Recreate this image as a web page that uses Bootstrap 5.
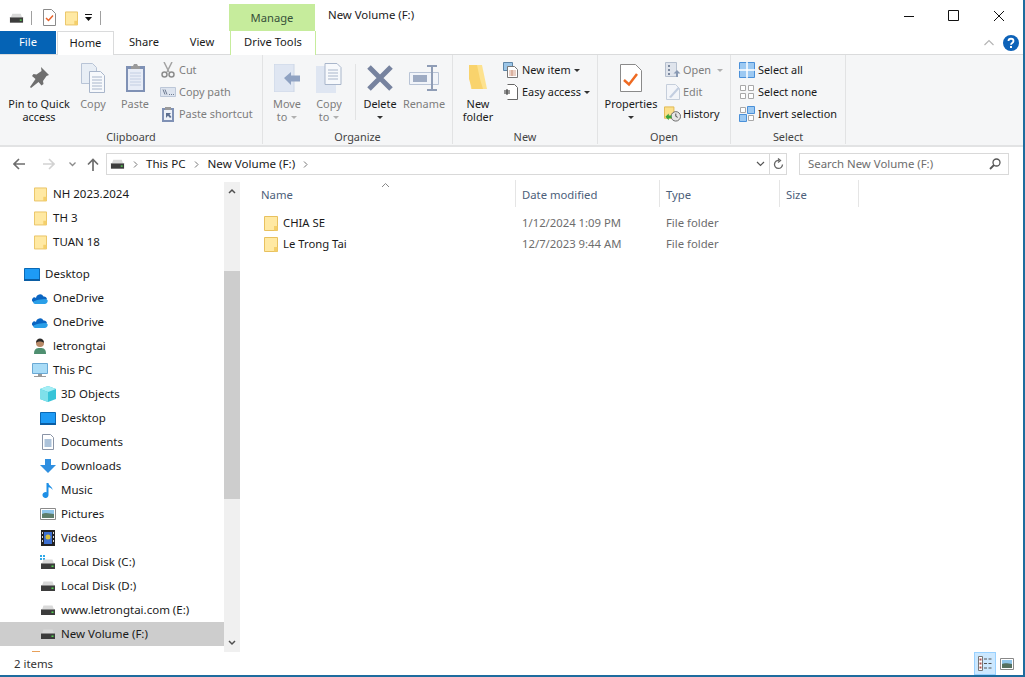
<!doctype html>
<html lang="en">
<head>
  <meta charset="utf-8">
  <meta name="viewport" content="width=device-width, initial-scale=1">
  <title>New Volume (F:)</title>
  <link href="https://cdn.jsdelivr.net/npm/bootstrap@5.3.0/dist/css/bootstrap.min.css" rel="stylesheet">
  <style>
    html, body { height: 100%; overflow: hidden; }
    body { font-family: "Noto Sans", "Open Sans", sans-serif; font-size: 10.9px; color: #1a1a1a; background: #fff; }
    svg { display: block; flex: none; }
    .win { height: 677px; width: 1025px; border-right: 2px solid #1e6c9e; border-bottom: 2px solid #1e6c9e; }

    /* title bar */
    .titlebar { height: 31px; }
    .qa-sep { width: 1px; height: 14px; background: #a0a0a0; }
    .qa { padding: 4px 0 0 9px; gap: 7px; width: 229px; }
    .qa-2 { margin-left: 2px; }
    .manage { width: 86px; margin-top: 4px; background: #c6ec9c; color: #37503a; padding-top: 6px; text-align: center; font-size: 11.2px; }
    .wintitle { padding: 6px 0 0 13px; font-size: 11.4px; }
    .winctl { padding-right: 2px; }
    .winbtn { width: 45px; height: 31px; }

    /* tabs */
    .tabrow { height: 24px; border-bottom: 1px solid #dadbdc; }
    .rtab { height: 24px; line-height: 22px; text-align: center; font-size: 11.2px; }
    .rtab-file { width: 56px; height: 23px; background: #0563b5; color: #fff; margin-right: 1px; }
    .rtab-home { width: 57px; background: #fff; border: 1px solid #dadbdc; border-bottom: 0; }
    .rtab-share { width: 60px; }
    .rtab-view { width: 56px; }
    .rtab-drive { width: 86px; background: #fff; border: 1px solid #c6ec9c; border-top: 0; border-bottom: 0; }

    /* ribbon */
    .ribbon { height: 92px; background: #f5f6f7; border-bottom: 2px solid #e2e3e4; }
    .rb-group { height: 89px; border-right: 1px solid #e2e3e4; }
    .rb-body { height: 75px; padding-top: 4px; }
    .rb-label { height: 14px; line-height: 14px; text-align: center; color: #444; }
    .g-clip { width: 263px; }
    .g-clip .rb-body { padding-left: 6px; }
    .g-org { width: 190px; }
    .g-org .rb-body { padding-left: 3px; }
    .g-new { width: 145px; }
    .g-new .rb-body { padding-left: 7px; }
    .g-open { width: 133px; }
    .g-open .rb-body { padding-left: 5px; }
    .g-sel { width: 115px; }
    .g-sel .rb-body { padding-left: 8px; }
    .rb-big { line-height: 13px; text-align: center; }
    .rb-big .ic { height: 38px; display: flex; align-items: center; justify-content: center; }
    .w-pin { width: 66px; }
    .w-42 { width: 42px; }
    .w-36 { width: 36px; }
    .w-44 { width: 44px; }
    .w-56 { width: 56px; }
    .rb-vsep { width: 1px; height: 56px; background: #e2e3e4; margin: 5px 2px 0 5px; }
    .off { color: #7d7d7d; }
    .rb-small { height: 22px; gap: 3px; white-space: nowrap; }
    .caret-dn { display: inline-block; width: 0; height: 0; border: 3px solid transparent; border-top: 3px solid #333; border-bottom: 0; vertical-align: 2px; margin-left: 4px; }
    .caret-off { border-top-color: #b0b0b0; }
    .rb-small .caret-dn { margin-left: 0; }
    .rb-col { margin-left: 4px; }
    .col-new { margin-left: 7px; }
    .col-open { margin-left: 6px; }
    .col-open .rb-small { gap: 2px; }
    .hist-ic { margin-left: -1px; }

    /* address bar */
    .addrbar { height: 33px; padding-top: 6px; }
    .navbtns { width: 106px; height: 22px; }
    .nb-1 { margin-left: 13px; }
    .nb-2 { margin-left: 18px; }
    .nb-3 { margin-left: 14px; }
    .nb-4 { margin-left: 11px; }
    .addr { width: 681px; height: 22px; border: 1px solid #d9d9d9; font-size: 11.6px; }
    .addr-path { width: 663px; padding-left: 3px; }
    .addr-ref { width: 17px; border-left: 1px solid #d9d9d9; }
    .crumb-sep { margin: 0 9px 0 8px; }
    .srch { width: 210px; height: 22px; margin-left: 12px; border: 1px solid #d9d9d9; color: #6d6d6d; padding: 0 7px 0 8px; font-size: 11.4px; }

    /* panes */
    .panes { height: 472px; }
    .tree { width: 224px; height: 470px; margin-top: 2px; overflow: hidden; font-size: 11.5px; }
    .tree-row { height: 24px; padding: 0; border: 0; white-space: nowrap; background: transparent; color: #1a1a1a; flex: none; }
    .in-f { padding-left: 34px; gap: 6px; }
    .in-1 { padding-left: 24px; gap: 5px; }
    .in-2 { padding-left: 32px; gap: 5px; }
    .in-3 { padding-left: 40px; gap: 5px; }
    .tree-gap { margin-top: 8px; }
    .tree-sel { background: #cdcdcd; }
    .sbar { width: 16px; background: #f0f0f0; height: 470px; margin-top: 2px; }
    .sb-btn { height: 18px; }
    .sb-a { height: 71px; }
    .sb-thumb { height: 228px; background: #cdcdcd; }
    .files { flex: 1; padding-left: 18px; font-size: 11.3px; }
    .colhead { height: 28px; color: #4c607a; position: relative; }
    .colhead > div { padding-left: 6px; border-right: 1px solid #e5e5e5; height: 27px; line-height: 30px; }
    .colhead > .c-name { padding-left: 3px; }
    .sortup { position: absolute; left: 123px; top: 2px; }
    .c-name { width: 258px; }
    .c-date { width: 144px; }
    .c-type { width: 120px; }
    .c-size { width: 79px; }
    .frow { height: 21px; line-height: 21px; }
    .frow > div { padding-left: 6px; }
    .frow .c-name { padding-left: 6px; gap: 5px; color: #1a1a1a; }
    .meta { color: #6d6d6d; }
    .filelist { padding-top: 4px; }

    /* status */
    .statusbar { height: 23px; padding-left: 14px; font-size: 11.4px; color: #333; }
    .vw-on { width: 22px; height: 23px; background: #cce8ff; border: 1px solid #99d1ff; }
    .vw-off { width: 14px; height: 21px; margin: 0 9px 0 4px; }
  </style>
</head>
<body>
  <svg width="0" height="0" style="position:absolute">
    <defs>
      <symbol id="folder" viewBox="0 0 14 16">
        <path d="M.5 1.500h13v14H.500z" fill="#ffe9a3" stroke="#e8c15f"/>
        <path d="M10 11h3.500v4.500H10z" fill="#f4cf6b"/>
      </symbol>
      <symbol id="drive" viewBox="0 0 16 10">
        <path d="M2 4.500 3.500.500h9L14 4.500z" fill="#d9d9d9"/>
        <path d="M1 4h14v6H1z" fill="#3c3c3c"/>
        <path d="M1 4h14v1H1z" fill="#8a8a8a"/>
        <path d="M11.500 6.500h2v1.500h-2z" fill="#53d34f"/>
      </symbol>
      <symbol id="desk" viewBox="0 0 16 13">
        <path d="M.5.500h15v11H.500z" fill="#1e9bf5" stroke="#0a69b5"/>
        <path d="M0 11h16v2H0z" fill="#0b5da3"/>
      </symbol>
      <symbol id="cloud" viewBox="0 0 16 11">
        <path d="M4 5a4 4 0 0 1 7.500-1.500A3 3 0 0 1 15 6.500L8 8 1 9A2.500 2.500 0 0 1 4 5z" fill="#0a65c2"/>
        <path d="M3 11a3 3 0 0 1-2-1.500C3 7 6 7 8.500 6.500s5-1 7 .5a3 3 0 0 1-2.500 4z" fill="#2a9fe8"/>
      </symbol>
    </defs>
  </svg>

  <div class="win d-flex flex-column">
    <!-- title bar -->
    <div class="titlebar d-flex">
      <div class="qa d-flex align-items-center">
        <svg width="15" height="10"><use href="#drive"/></svg>
        <span class="qa-sep"></span>
        <svg class="ms-1" width="13" height="17" viewBox="0 0 13 17"><path d="M.5.500h8l4 4v12H.500z" fill="#fff" stroke="#8a8a8a"/><path d="M3 9l2.500 2.500L10 6.500" fill="none" stroke="#e8622a" stroke-width="1.500"/></svg>
        <svg class="qa-2" width="13" height="16"><use href="#folder"/></svg>
        <svg width="8" height="8" viewBox="0 0 8 8"><path d="M0 0h7v1H0zM0 3h7L3.500 7z" fill="#111"/></svg>
        <span class="qa-sep"></span>
      </div>
      <div class="manage">Manage</div>
      <div class="wintitle flex-grow-1">New Volume (F:)</div>
      <div class="d-flex winctl">
        <div class="winbtn d-flex align-items-center justify-content-center"><svg width="12" height="10" viewBox="0 0 12 10"><path d="M1 5.500h10" stroke="#111"/></svg></div>
        <div class="winbtn d-flex align-items-center justify-content-center"><svg width="11" height="11" viewBox="0 0 11 11"><path d="M.5.500h10v10H.500z" fill="none" stroke="#111"/></svg></div>
        <div class="winbtn d-flex align-items-center justify-content-center"><svg width="12" height="12" viewBox="0 0 12 12"><path d="M1 1l10 10M11 1 1 11" stroke="#111"/></svg></div>
      </div>
    </div>

    <!-- ribbon tabs -->
    <div class="tabrow d-flex">
      <div class="rtab rtab-file">File</div>
      <div class="rtab rtab-home">Home</div>
      <div class="rtab rtab-share">Share</div>
      <div class="rtab rtab-view">View</div>
      <div class="rtab rtab-drive">Drive Tools</div>
      <div class="ms-auto d-flex align-items-center gap-2 pe-1">
        <svg width="12" height="8" viewBox="0 0 12 8"><path d="M1.500 6 6 1.500 10.500 6" fill="none" stroke="#b5b5b5" stroke-width="1.200"/></svg>
        <svg width="16" height="16" viewBox="0 0 16 16"><circle cx="8" cy="8" r="8" fill="#0d62b8"/><path d="M5.500 6C5.500 3 10.500 3 10.500 6c0 2-2.500 2-2.500 3.800" fill="none" stroke="#fff" stroke-width="1.800"/><path d="M7 11h2v2H7z" fill="#fff"/></svg>
      </div>
    </div>

    <!-- ribbon -->
    <div class="ribbon d-flex">
      <div class="rb-group g-clip">
        <div class="rb-body d-flex">
          <div class="rb-big w-pin"><div class="ic"><svg width="22" height="24" viewBox="0 0 22 24"><path d="M13 1l8 8-2.500 1-3.500 5 .5 3-2 1.500-3-3.500L3 22l-1-1 5.500-8L4 10l1.500-2 3 .5 5-3.500z" fill="#6f6f6f"/></svg></div>Pin to Quick<br>access</div>
          <div class="rb-big w-42 off"><div class="ic"><svg width="24" height="30" viewBox="0 0 24 30"><path d="M.5.500h11l4 4v16H.500z" fill="#e8eef5" stroke="#b8c4d6"/><path d="M8.500 8.500h11l4 4v17h-15z" fill="#f7f9fc" stroke="#a9b6cb"/><path d="M11 14h10M11 17h10M11 20h10M11 23h10M11 26h10" stroke="#a9b6cb"/></svg></div>Copy</div>
          <div class="rb-big w-42 off"><div class="ic"><svg width="21" height="30" viewBox="0 0 21 30"><path d="M1 3h19v26H1z" fill="#7f91b5"/><path d="M3 6h15v21H3z" fill="#e8edf7"/><path d="M5 10h11M5 13h11M5 16h11M5 19h11M5 22h11" stroke="#c3cee2"/><path d="M6 3h2l1-2h3l1 2h2v3H6z" fill="#9a9a9a"/></svg></div>Paste</div>
          <div class="rb-col">
            <div class="rb-small d-flex align-items-center off"><svg width="16" height="16" viewBox="0 0 16 16"><path d="M4 0l5 10M12 0 7 10" stroke="#a3a3a3" stroke-width="1.500"/><circle cx="4.500" cy="12.500" r="2.500" fill="none" stroke="#8c8c8c" stroke-width="1.500"/><circle cx="11.500" cy="12.500" r="2.500" fill="none" stroke="#8c8c8c" stroke-width="1.500"/></svg>Cut</div>
            <div class="rb-small d-flex align-items-center off"><svg width="16" height="10" viewBox="0 0 16 10"><path d="M.5.500h15v9H.500z" fill="#dde4ef" stroke="#bcc7d8"/><path d="M3 2.500 5 7.500M5 2.500 7 7.500M9 7.500h1M11 7.500h1M13 7.500h1" stroke="#6d7a90"/></svg>Copy path</div>
            <div class="rb-small d-flex align-items-center off"><svg width="16" height="16" viewBox="0 0 16 16"><path d="M2 2h12v14H2z" fill="#7f91b5"/><path d="M4 4h8v10H4z" fill="#edf1f8"/><path d="M5 1h6v3H5z" fill="#9a9a9a"/><path d="M6 12V7h5L9.500 8.500 11.500 11 10 12 8 9.800 6.800 11z" fill="#5c6f90"/></svg>Paste shortcut</div>
          </div>
        </div>
        <div class="rb-label">Clipboard</div>
      </div>

      <div class="rb-group g-org">
        <div class="rb-body d-flex">
          <div class="rb-big w-42 off"><div class="ic"><svg width="26" height="28" viewBox="0 0 26 28"><path d="M0 0h20v28H0z" fill="#dfe6f2"/><path d="M0 0h20v28H0z" fill="none" stroke="#ccd6e6"/><path d="M10 14l7-6v3.500h9v6h-9V21z" fill="#8fa2c2"/></svg></div>Move<br>to<span class="caret-dn caret-off"></span></div>
          <div class="rb-big w-42 off"><div class="ic"><svg width="26" height="30" viewBox="0 0 26 30"><path d="M0 3h20v27H0z" fill="#dfe6f2"/><path d="M9 .5h12l4 4v17H9z" fill="#f7f9fc" stroke="#a9b6cb"/><path d="M12 7h10M12 10h10M12 13h10M12 16h10" stroke="#a9b6cb"/></svg></div>Copy<br>to<span class="caret-dn caret-off"></span></div>
          <div class="rb-vsep"></div>
          <div class="rb-big w-44"><div class="ic"><svg width="26" height="26" viewBox="0 0 26 26"><path d="M2 2l22 22M24 2 2 24" stroke="#77839f" stroke-width="5"/></svg></div>Delete<br><span class="caret-dn m-0"></span></div>
          <div class="rb-big w-44 off"><div class="ic"><svg width="30" height="26" viewBox="0 0 30 26"><path d="M.5 7.500h29v12H.500z" fill="#f1f4f9" stroke="#b9c4d6"/><path d="M4 10h14v7H4z" fill="#9eabc3"/><path d="M18 1h10M18 25h10M23 1v24" stroke="#8f9db6" stroke-width="2"/></svg></div>Rename</div>
        </div>
        <div class="rb-label">Organize</div>
      </div>

      <div class="rb-group g-new">
        <div class="rb-body d-flex">
          <div class="rb-big w-36"><div class="ic"><svg width="18" height="26" viewBox="0 0 18 26"><path d="M0 0h13l5 24H2z" fill="#fde28f"/><path d="M0 0h8l3 14 3 10H3L0 14z" fill="#f9d36c"/></svg></div>New<br>folder</div>
          <div class="col-new">
            <div class="rb-small d-flex align-items-center"><svg width="16" height="16" viewBox="0 0 16 16"><path d="M.5.500h9v8h-9z" fill="#9cc6e8" stroke="#5e86a8"/><path d="M4.500 4.500h7l3 3v8h-10z" fill="#fff" stroke="#777"/><path d="M6 9h7M6 11h7M6 13h7M9 8v6" stroke="#c0785a" stroke-width=".7"/></svg>New item<span class="caret-dn"></span></div>
            <div class="rb-small d-flex align-items-center"><svg width="16" height="16" viewBox="0 0 16 16"><path d="M4.500.5h7l3 3v12h-10" fill="#fff" stroke="#666"/><path d="M1 7h6M1 9h6M4 5v6" stroke="#333"/></svg>Easy access<span class="caret-dn"></span></div>
          </div>
        </div>
        <div class="rb-label">New</div>
      </div>

      <div class="rb-group g-open">
        <div class="rb-body d-flex">
          <div class="rb-big w-56"><div class="ic"><svg width="22" height="28" viewBox="0 0 22 28"><path d="M.5.500h15l6 6v21H.500z" fill="#fff" stroke="#8a8a8a"/><path d="M4 16l5 4.500L17 10" fill="none" stroke="#ee6a22" stroke-width="2.500"/></svg></div>Properties<br><span class="caret-dn m-0"></span></div>
          <div class="col-open">
            <div class="rb-small d-flex align-items-center off"><svg width="16" height="16" viewBox="0 0 16 16"><path d="M.5.500h11v14H.500z" fill="#dfe4ec" stroke="#b5bfce"/><path d="M3 3h2v2H3zM3 7h2v2H3zM3 11h2v2H3z" fill="#7d8aa0"/><path d="M12 8l3.500 3.500H13V15h-2v-3.500H8.500z" fill="#8899b3"/></svg>Open<span class="caret-dn caret-off ms-1"></span></div>
            <div class="rb-small d-flex align-items-center off"><svg width="16" height="16" viewBox="0 0 16 16"><path d="M1.500.500h9l4 4v11h-13z" fill="#f3f5f9" stroke="#c5cedb"/><path d="M4 13 13 3l1.500 1.500L6 14z" fill="#c3cee0"/></svg>Edit</div>
            <div class="rb-small d-flex align-items-center"><svg class="hist-ic" width="17" height="16" viewBox="0 0 18 16"><path d="M.5.500h10v12H.500z" fill="#fbe08c" stroke="#e0b850"/><circle cx="12.500" cy="10.500" r="5" fill="#e6e6e6" stroke="#666"/><path d="M12.500 7.500v3l2 1" fill="none" stroke="#444"/><path d="M1.500 11 5 7.500V9.500h3v3H5v2z" fill="#3aa53a"/></svg>History</div>
          </div>
        </div>
        <div class="rb-label">Open</div>
      </div>

      <div class="rb-group g-sel">
        <div class="rb-body">
          <div class="rb-small d-flex align-items-center"><svg width="16" height="16" viewBox="0 0 16 16"><path d="M.5.500h15v15H.500z" fill="#9cc9f2" stroke="#4a90d9"/><path d="M8 0v16M0 8h16" stroke="#fff" stroke-width="1.500"/></svg>Select all</div>
          <div class="rb-small d-flex align-items-center"><svg width="16" height="16" viewBox="0 0 16 16"><path d="M1.500 1.500h5v5h-5zM9.500 1.500h5v5h-5zM1.500 9.500h5v5h-5zM9.500 9.500h5v5h-5z" fill="#fff" stroke="#a8a8a8"/></svg>Select none</div>
          <div class="rb-small d-flex align-items-center"><svg width="16" height="16" viewBox="0 0 16 16"><path d="M1.500 1.500h5v5h-5zM9.500 9.500h5v5h-5z" fill="#fff" stroke="#a8a8a8"/><path d="M8.500.500h7v7h-7zM.500 8.500h7v7h-7z" fill="#9cc9f2" stroke="#4a90d9"/></svg>Invert selection</div>
        </div>
        <div class="rb-label">Select</div>
      </div>
    </div>

    <!-- address bar -->
    <div class="addrbar d-flex">
      <div class="navbtns d-flex align-items-center">
        <svg class="nb-1" width="12" height="12" viewBox="0 0 12 12"><path d="M1 6h11M6 1 1 6l5 5" fill="none" stroke="#6d6d6d" stroke-width="1.600"/></svg>
        <svg class="nb-2" width="12" height="12" viewBox="0 0 12 12"><path d="M0 6h11M6 1l5 5-5 5" fill="none" stroke="#d2d2d2" stroke-width="1.600"/></svg>
        <svg class="nb-3" width="7" height="5" viewBox="0 0 7 5"><path d="M.5.500l3 3 3-3" fill="none" stroke="#8a8a8a" stroke-width="1.300"/></svg>
        <svg class="nb-4" width="12" height="13" viewBox="0 0 12 13"><path d="M6 13V1.500M1 6.500l5-5 5 5" fill="none" stroke="#6d6d6d" stroke-width="1.700"/></svg>
      </div>
      <div class="addr d-flex">
        <div class="addr-path d-flex align-items-center">
          <svg width="15" height="10"><use href="#drive"/></svg>
          <svg class="mx-2" width="5" height="7" viewBox="0 0 5 7"><path d="M1 .5l3 3-3 3" fill="none" stroke="#777"/></svg>
          <span>This PC</span>
          <svg class="crumb-sep" width="5" height="7" viewBox="0 0 5 7"><path d="M1 .5l3 3-3 3" fill="none" stroke="#777"/></svg>
          <span>New Volume (F:)</span>
          <svg class="crumb-sep" width="5" height="7" viewBox="0 0 5 7"><path d="M1 .5l3 3-3 3" fill="none" stroke="#777"/></svg>
          <svg class="ms-auto me-1" width="9" height="6" viewBox="0 0 9 6"><path d="M1 1l3.500 3.500L8 1" fill="none" stroke="#555" stroke-width="1.200"/></svg>
        </div>
        <div class="addr-ref d-flex align-items-center justify-content-center"><svg width="11" height="12" viewBox="0 0 11 12"><path d="M9.500 6.500A4 4 0 1 1 6 2.500M5 .5l2.500 2L5 4.500" fill="none" stroke="#666" stroke-width="1.300"/></svg></div>
      </div>
      <div class="srch d-flex align-items-center justify-content-between">
        <span>Search New Volume (F:)</span>
        <svg width="12" height="12" viewBox="0 0 12 12"><circle cx="7.500" cy="4.500" r="3.500" fill="none" stroke="#555" stroke-width="1.300"/><path d="M5 7l-4 4" stroke="#555" stroke-width="1.800"/></svg>
      </div>
    </div>

    <!-- navigation pane + file list -->
    <div class="panes d-flex">
      <div class="tree">
        <div class="list-group list-group-flush">
          <div class="list-group-item tree-row in-f d-flex align-items-center"><svg width="13" height="16"><use href="#folder"/></svg><span>NH 2023.2024</span></div>
          <div class="list-group-item tree-row in-f d-flex align-items-center"><svg width="13" height="16"><use href="#folder"/></svg><span>TH 3</span></div>
          <div class="list-group-item tree-row in-f d-flex align-items-center"><svg width="13" height="16"><use href="#folder"/></svg><span>TUAN 18</span></div>
          <div class="list-group-item tree-row in-1 tree-gap d-flex align-items-center"><svg width="16" height="13"><use href="#desk"/></svg><span>Desktop</span></div>
          <div class="list-group-item tree-row in-2 d-flex align-items-center"><svg width="16" height="11"><use href="#cloud"/></svg><span>OneDrive</span></div>
          <div class="list-group-item tree-row in-2 d-flex align-items-center"><svg width="16" height="11"><use href="#cloud"/></svg><span>OneDrive</span></div>
          <div class="list-group-item tree-row in-2 d-flex align-items-center"><svg width="16" height="16" viewBox="0 0 16 16"><path d="M2 16c0-5 2-6 6-6s6 1 6 6z" fill="#4f8f70"/><circle cx="8" cy="5" r="4" fill="#b98a68"/><path d="M4 5c0-6 8-6 8 0-2-2-6-2-8 0z" fill="#2a2a2a"/></svg><span>letrongtai</span></div>
          <div class="list-group-item tree-row in-2 d-flex align-items-center"><svg width="16" height="16" viewBox="0 0 16 16"><path d="M.5 1.500h15v10H.500z" fill="#a9dcf7" stroke="#6aa9d4"/><path d="M6 12h4v2H6zM2 14h12v1H2z" fill="#9a9a9a"/></svg><span>This PC</span></div>
          <div class="list-group-item tree-row in-3 d-flex align-items-center"><svg width="16" height="16" viewBox="0 0 16 16"><path d="M8 0l8 3v10l-8 3-8-3V3z" fill="#37c4d8"/><path d="M0 3l8 3 8-3-8-3z" fill="#a5eef5"/><path d="M0 3l8 3v10l-8-3z" fill="#7fe0ea"/></svg><span>3D Objects</span></div>
          <div class="list-group-item tree-row in-3 d-flex align-items-center"><svg width="16" height="13"><use href="#desk"/></svg><span>Desktop</span></div>
          <div class="list-group-item tree-row in-3 d-flex align-items-center"><svg width="16" height="16" viewBox="0 0 16 16"><path d="M2.500.5h8l3 3v12h-11z" fill="#fff" stroke="#8a94a6"/><path d="M4.500 6h7M4.500 8h7M4.500 10h7M4.500 12h7" stroke="#5a87b5"/></svg><span>Documents</span></div>
          <div class="list-group-item tree-row in-3 d-flex align-items-center"><svg width="16" height="16" viewBox="0 0 16 16"><path d="M5 1h6v6h5l-8 8-8-8h5z" fill="#2f8fe0"/></svg><span>Downloads</span></div>
          <div class="list-group-item tree-row in-3 d-flex align-items-center"><svg width="16" height="16" viewBox="0 0 16 16"><path d="M6.500 1h2c0 3 4 3.500 4 7-1-2-2.500-2.500-4-2.800V13a3 3 0 1 1-2-2.800z" fill="#1e8fe6"/></svg><span>Music</span></div>
          <div class="list-group-item tree-row in-3 d-flex align-items-center"><svg width="16" height="16" viewBox="0 0 16 16"><path d="M.5 2.500h15v11H.500z" fill="#fff" stroke="#8a8a8a"/><path d="M2 4h12v4H2z" fill="#8fc5ea"/><path d="M2 8c4-2 8 0 12 0v4H2z" fill="#5d7d6b"/></svg><span>Pictures</span></div>
          <div class="list-group-item tree-row in-3 d-flex align-items-center"><svg width="16" height="16" viewBox="0 0 16 16"><path d="M1 0h14v16H1z" fill="#222"/><path d="M4 2h8v12H4z" fill="#3c6fd0"/><circle cx="8" cy="7" r="2.500" fill="#d9c13c"/><path d="M2 2h1v2H2zM2 6h1v2H2zM2 10h1v2H2zM13 2h1v2h-1zM13 6h1v2h-1zM13 10h1v2h-1z" fill="#ddd"/></svg><span>Videos</span></div>
          <div class="list-group-item tree-row in-3 d-flex align-items-center"><svg width="16" height="14" viewBox="0 0 16 14"><path d="M0 0h2v2H0zM3 0h2v2H3zM0 3h2v2H0zM3 3h2v2H3z" fill="#2ea8e8"/><use href="#drive" y="4" width="16" height="10"/></svg><span>Local Disk (C:)</span></div>
          <div class="list-group-item tree-row in-3 d-flex align-items-center"><svg width="16" height="10"><use href="#drive"/></svg><span>Local Disk (D:)</span></div>
          <div class="list-group-item tree-row in-3 d-flex align-items-center"><svg width="16" height="10"><use href="#drive"/></svg><span>www.letrongtai.com (E:)</span></div>
          <div class="list-group-item tree-row in-3 tree-sel d-flex align-items-center"><svg width="16" height="10"><use href="#drive"/></svg><span>New Volume (F:)</span></div>
          <div class="list-group-item tree-row in-2 d-flex align-items-center"><svg width="8" height="16" viewBox="0 0 8 16"><path d="M0 1h8v1H0z" fill="#e8a05a"/></svg></div>
        </div>
      </div>
      <div class="sbar d-flex flex-column">
        <div class="sb-btn d-flex align-items-center justify-content-center"><svg width="8" height="6" viewBox="0 0 8 6"><path d="M1 5l3-3 3 3" fill="none" stroke="#505050" stroke-width="1.500"/></svg></div>
        <div class="sb-a"></div>
        <div class="sb-thumb"></div>
        <div class="flex-grow-1"></div>
        <div class="sb-btn d-flex align-items-center justify-content-center"><svg width="8" height="6" viewBox="0 0 8 6"><path d="M1 1l3 3 3-3" fill="none" stroke="#505050" stroke-width="1.500"/></svg></div>
      </div>
      <div class="files">
        <div class="colhead d-flex">
          <svg class="sortup" width="9" height="6" viewBox="0 0 9 6"><path d="M1 5l3.500-3.500L8 5" fill="none" stroke="#888"/></svg>
          <div class="c-name">Name</div>
          <div class="c-date">Date modified</div>
          <div class="c-type">Type</div>
          <div class="c-size">Size</div>
        </div>
        <div class="filelist">
          <div class="frow d-flex">
            <div class="c-name d-flex align-items-center"><svg width="14" height="16"><use href="#folder"/></svg><span>CHIA SE</span></div>
            <div class="c-date meta">1/12/2024 1:09 PM</div>
            <div class="c-type meta">File folder</div>
          </div>
          <div class="frow d-flex">
            <div class="c-name d-flex align-items-center"><svg width="14" height="16"><use href="#folder"/></svg><span>Le Trong Tai</span></div>
            <div class="c-date meta">12/7/2023 9:44 AM</div>
            <div class="c-type meta">File folder</div>
          </div>
        </div>
      </div>
    </div>

    <!-- status bar -->
    <div class="statusbar d-flex align-items-center">
      <span>2 items</span>
      <div class="ms-auto d-flex align-items-center">
        <div class="vw-on d-flex align-items-center justify-content-center"><svg width="15" height="15" viewBox="0 0 15 15"><path d="M.5.500h4v14h-4z" fill="#fff" stroke="#777"/><path d="M1.500 2.500h2v2h-2zM1.500 6.500h2v2h-2zM1.500 10.500h2v2h-2z" fill="#b05050"/><path d="M6 3h3M10.500 3h3M6 7.500h3M10.500 7.500h3M6 12h3M10.500 12h3" stroke="#555"/></svg></div>
        <div class="vw-off d-flex align-items-center justify-content-center"><svg width="14" height="12" viewBox="0 0 14 12"><path d="M.5.500h13v11H.500z" fill="#fff" stroke="#888"/><path d="M2 2h10v4H2z" fill="#8fc5ea"/><path d="M2 6c3-1.500 7 0 10 0v4H2z" fill="#557060"/></svg></div>
      </div>
    </div>
  </div>
</body>
</html>
